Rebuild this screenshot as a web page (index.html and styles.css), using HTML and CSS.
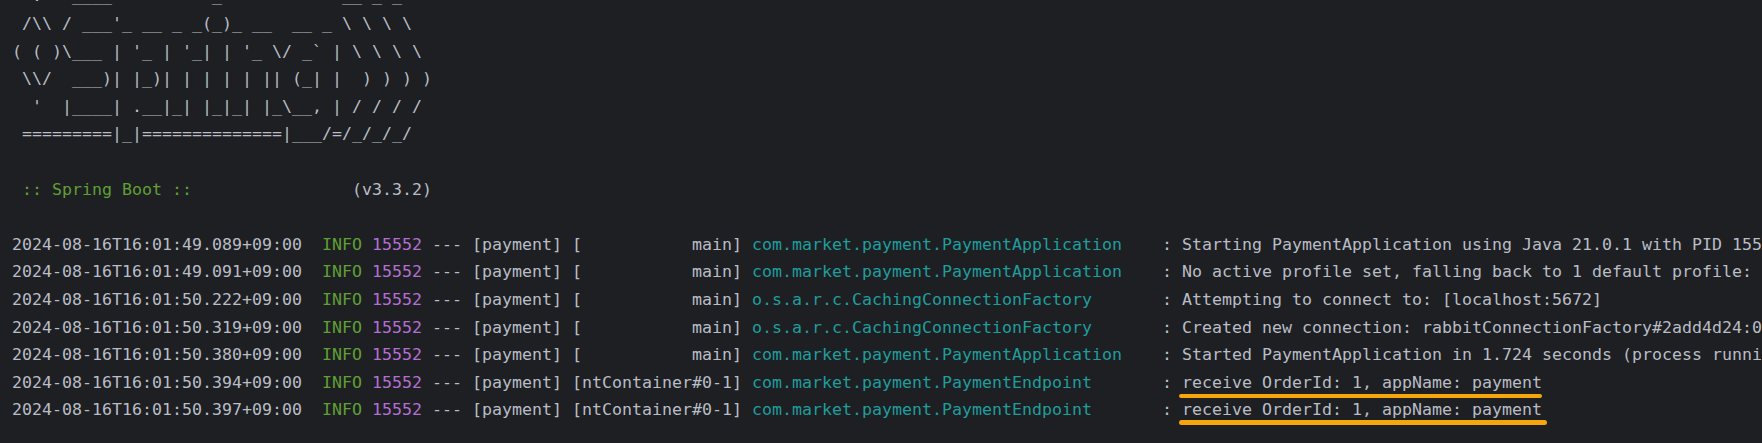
FILE: index.html
```html
<!DOCTYPE html>
<html lang="en">
<head>
  <meta charset="UTF-8">
  <title>payment - Run</title>
  <link rel="stylesheet" href="styles.css">
</head>
<body>
<div class="console">
<div class="line">  .   ____          _            __ _ _</div>
<div class="line"> /\\ / ___'_ __ _ _(_)_ __  __ _ \ \ \ \</div>
<div class="line">( ( )\___ | '_ | '_| | '_ \/ _` | \ \ \ \</div>
<div class="line"> \\/  ___)| |_)| | | | | || (_| |  ) ) ) )</div>
<div class="line">  '  |____| .__|_| |_|_| |_\__, | / / / /</div>
<div class="line"> =========|_|==============|___/=/_/_/_/</div>
<div class="line"> </div>
<div class="line"><span class="boot"> :: Spring Boot :: </span>               (v3.3.2)</div>
<div class="line"> </div>
<div class="line">2024-08-16T16:01:49.089+09:00  <span class="lvl">INFO</span> <span class="pid">15552</span> --- [payment] [           main] <span class="log">com.market.payment.PaymentApplication   </span> : Starting PaymentApplication using Java 21.0.1 with PID 15552 (C:\workspace\market\payment\build\classes\java\main started by user)</div>
<div class="line">2024-08-16T16:01:49.091+09:00  <span class="lvl">INFO</span> <span class="pid">15552</span> --- [payment] [           main] <span class="log">com.market.payment.PaymentApplication   </span> : No active profile set, falling back to 1 default profile: "default"</div>
<div class="line">2024-08-16T16:01:50.222+09:00  <span class="lvl">INFO</span> <span class="pid">15552</span> --- [payment] [           main] <span class="log">o.s.a.r.c.CachingConnectionFactory      </span> : Attempting to connect to: [localhost:5672]</div>
<div class="line">2024-08-16T16:01:50.319+09:00  <span class="lvl">INFO</span> <span class="pid">15552</span> --- [payment] [           main] <span class="log">o.s.a.r.c.CachingConnectionFactory      </span> : Created new connection: rabbitConnectionFactory#2add4d24:0/SimpleConnection@6b8d54da [delegate=amqp://guest@127.0.0.1:5672/, localPort=51510]</div>
<div class="line">2024-08-16T16:01:50.380+09:00  <span class="lvl">INFO</span> <span class="pid">15552</span> --- [payment] [           main] <span class="log">com.market.payment.PaymentApplication   </span> : Started PaymentApplication in 1.724 seconds (process running for 2.163)</div>
<div class="line">2024-08-16T16:01:50.394+09:00  <span class="lvl">INFO</span> <span class="pid">15552</span> --- [payment] [ntContainer#0-1] <span class="log">com.market.payment.PaymentEndpoint      </span> : <span class="mark">receive OrderId: 1, appName: payment</span></div>
<div class="line">2024-08-16T16:01:50.397+09:00  <span class="lvl">INFO</span> <span class="pid">15552</span> --- [payment] [ntContainer#0-1] <span class="log">com.market.payment.PaymentEndpoint      </span> : <span class="mark second">receive OrderId: 1, appName: payment</span></div>
</div>
</body>
</html>
```

FILE: styles.css
```css
html, body {
  margin: 0;
  padding: 0;
  height: 100%;
  overflow: hidden;
  background-color: #1e1f22;
}

.console {
  margin-top: -17.6px;
  padding-left: 12px;
  font-family: "DejaVu Sans Mono", "Liberation Mono", monospace;
  font-size: 16.61px;
  line-height: 27.6px;
  color: #b8bdc6;
}

.line {
  white-space: pre;
  height: 27.6px;
}

.boot {
  color: #5f9f35;
}

.lvl {
  color: #5f9f35;
}

.pid {
  color: #b46fd3;
}

.log {
  color: #1f9d9d;
}

/* hand drawn highlight under the message */
.mark {
  position: relative;
}

.mark::after {
  content: "";
  position: absolute;
  left: -3px;
  right: 0;
  top: calc(100% + 2px);
  height: 4.6px;
  border-radius: 3px;
  background-color: #f4a60c;
}

.mark.second::after {
  top: calc(100% + 0.8px);
  right: -5px;
}
```
